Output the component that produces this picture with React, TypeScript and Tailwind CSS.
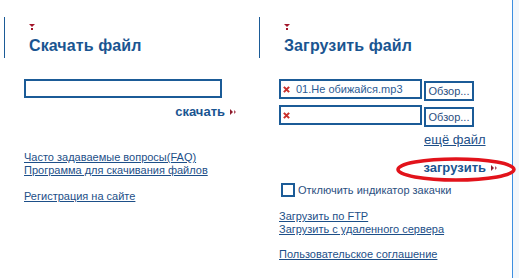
import React from 'react';

const BLUE = 'text-[#1a5591]';

const Marker = () => (
  <svg width="6" height="6" viewBox="0 0 6 6" className="block">
    <path d="M0 0h6L3 3z" fill="#a3152a" />
    <rect x="2" y="4" width="2" height="2" fill="#a3152a" />
  </svg>
);

const Arrows = () => (
  <svg width="7" height="6" viewBox="0 0 7 6" className="inline-block ml-[5px] align-middle">
    <path d="M0 0l3 3-3 3z" fill="#8e1b2c" />
    <path d="M4 1l2 2-2 2z" fill="#b05060" />
  </svg>
);

const Cross = () => (
  <svg width="7" height="7" viewBox="0 0 8 8" className="shrink-0">
    <path d="M1 1l6 6M7 1L1 7" stroke="#c9302c" strokeWidth="2.4" />
  </svg>
);

const Header: React.FC<{ title: string }> = ({ title }) => (
  <div className="border-l border-[#1b5b97] h-[41px] pl-[24px] pt-[7px]">
    <Marker />
    <h2 className={`mt-[7px] text-[16px] leading-[18px] font-bold ${BLUE} tracking-[0.1px]`}>{title}</h2>
  </div>
);

const Link: React.FC<{ children: React.ReactNode }> = ({ children }) => (
  <a href="#" className="block underline text-[11px] leading-[13px] text-[#1d4f88]">
    {children}
  </a>
);

const FileRow: React.FC<{ name?: string }> = ({ name }) => (
  <div className="flex items-start gap-[2px] h-[22px]">
    <div className="w-[143px] h-[20px] border-2 border-[#1b5b97] flex items-center pl-[2px] gap-[6px]">
      <Cross />
      {name && <span className="text-[11px] leading-[13px] text-[#2b5b95]">{name}</span>}
    </div>
    <button className="mt-[2px] w-[50px] h-[20px] border-2 border-[#1b5b97] bg-white text-[11px] text-[#2b4f7f] leading-none">
      Обзор...
    </button>
  </div>
);

export default function App() {
  return (
    <div
      className="w-[519px] h-[278px] bg-white flex overflow-hidden relative"
      style={{ fontFamily: '"Liberation Sans", Arial, sans-serif' }}
    >
      {/* download column */}
      <div className="w-[259px] pl-[4px] pt-[17px] shrink-0">
        <Header title="Скачать файл" />
        <div className="pl-[20px] pt-[21px]">
          <div className="w-[198px] h-[19px] border-2 border-[#1b5b97]" />
          <div className="w-[213px] text-right mt-[5px] leading-[15px]">
            <a href="#" className={`text-[13px] leading-[15px] font-bold ${BLUE}`}>скачать</a>
            <Arrows />
          </div>
          <div className="mt-[32px]">
            <Link>Часто задаваемые вопросы(FAQ)</Link>
            <Link>Программа для скачивания файлов</Link>
            <div className="mt-[13px]">
              <Link>Регистрация на сайте</Link>
            </div>
          </div>
        </div>
      </div>

      {/* upload column */}
      <div className="w-[254px] pt-[17px] shrink-0 border-r border-[#3d8fe0]">
        <Header title="Загрузить файл" />
        <div className="pl-[20px] pt-[21px]">
          <div className="flex flex-col gap-[4px]">
            <FileRow name="01.Не обижайся.mp3" />
            <FileRow />
          </div>
          <div className="pl-[145px] mt-[4px] leading-[15px]">
            <a href="#" className="underline text-[13px] leading-[15px] text-[#1d4f88]">ещё файл</a>
          </div>
          <div className="w-[219px] text-right mt-[12px] leading-[15px]">
            <a href="#" className={`text-[13px] leading-[15px] font-bold ${BLUE}`}>загрузить</a>
            <Arrows />
          </div>
          <div className="flex items-center gap-[3px] mt-[8px] ml-[2px] h-[14px]">
            <div className="w-[14px] h-[14px] border-2 border-[#1b5b97]" />
            <span className="text-[11px] leading-[13px] text-[#2b4f7f]">Отключить индикатор закачки</span>
          </div>
          <div className="mt-[13px]">
            <Link>Загрузить по FTP</Link>
            <Link>Загрузить с удаленного сервера</Link>
            <div className="mt-[12px]">
              <Link>Пользовательское соглашение</Link>
            </div>
          </div>
        </div>
      </div>
      <div className="flex-1 bg-[#f3f7fb]" />

      {/* hand-drawn highlight */}
      <svg className="absolute left-[396px] top-[157px]" width="120" height="25" viewBox="0 0 120 25">
        <ellipse cx="60" cy="12.5" rx="58" ry="10.5" fill="none" stroke="#e2131b" strokeWidth="3.5" />
      </svg>
    </div>
  );
}
